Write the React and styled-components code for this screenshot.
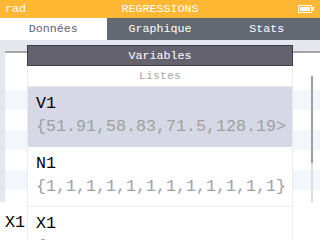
import React from 'react';
import styled, { createGlobalStyle } from 'styled-components';

const GlobalStyle = createGlobalStyle`
  html, body {
    margin: 0;
    padding: 0;
    background: #ffffff;
  }
  body {
    font-family: "Liberation Mono", "DejaVu Sans Mono", monospace;
  }
`;

const TABS = ['Données', 'Graphique', 'Stats'];
const ROWS = ['white', 'blue', 'white', 'blue', 'white', 'blue', 'white', 'blue'];
const VARIABLES = [
  { name: 'V1', values: '{51.91,58.83,71.5,128.19>', selected: true },
  { name: 'N1', values: '{1,1,1,1,1,1,1,1,1,1,1,1}' },
  { name: 'X1', values: '{' },
];

function Battery() {
  return (
    <svg width="16" height="8" viewBox="0 0 16 8">
      <rect x="0.5" y="0.5" width="13" height="7" fill="none" stroke="#fff" strokeWidth="1" />
      <rect x="2" y="2" width="10" height="4" fill="#fff" />
      <rect x="14" y="2" width="2" height="4" fill="#fff" />
    </svg>
  );
}

function App() {
  return (
    <>
      <GlobalStyle />
      <Screen>
        <StatusBar>
          <StatusLeft>rad</StatusLeft>
          <StatusTitle>REGRESSIONS</StatusTitle>
          <StatusRight>
            <Battery />
          </StatusRight>
        </StatusBar>
        <TabBar>
          {TABS.map((t, i) => (
            <Tab key={t} $active={i === 0}>
              {t}
            </Tab>
          ))}
        </TabBar>
        <Body>
          <Table>
            <TopLine />
            <HeaderRow />
            {ROWS.map((c, i) => (
              <Row key={i} $tone={c} />
            ))}
          </Table>
          <ScrollTrack>
            <ScrollThumb />
          </ScrollTrack>
        </Body>
        <Footer>
          <FooterLabel>X1</FooterLabel>
        </Footer>
        <Popup>
          <PopupTitle>Variables</PopupTitle>
          <List>
            <Section>Listes</Section>
            {VARIABLES.map((v) => (
              <Item key={v.name} $selected={v.selected}>
                <ItemName>{v.name}</ItemName>
                <ItemValues>{v.values}</ItemValues>
              </Item>
            ))}
          </List>
        </Popup>
      </Screen>
    </>
  );
}

export default App;

const Screen = styled.div`
  position: relative;
  width: 320px;
  height: 240px;
  overflow: hidden;
  background: #ffffff;
  display: flex;
  flex-direction: column;
`;

const StatusBar = styled.div`
  height: 18px;
  flex: none;
  background: #ffb734;
  color: #ffffff;
  display: grid;
  grid-template-columns: 1fr auto 1fr;
  align-items: center;
  padding: 0 5px;
  font-size: 11.67px;
  line-height: 14px;
`;

const StatusLeft = styled.span`
  justify-self: start;
`;

const StatusTitle = styled.span`
  justify-self: center;
`;

const StatusRight = styled.span`
  justify-self: end;
  display: flex;
  align-items: center;
  padding-right: 1px;
`;

const TabBar = styled.div`
  height: 22px;
  flex: none;
  display: grid;
  grid-template-columns: 1fr 1fr 1fr;
`;

const Tab = styled.div`
  display: flex;
  align-items: center;
  justify-content: center;
  font-size: 11.67px;
  background: ${(p) => (p.$active ? '#ffffff' : '#636973')};
  color: ${(p) => (p.$active ? '#5e6370' : '#ffffff')};
`;

const Body = styled.div`
  position: relative;
  height: 162px;
  flex: none;
  background: #e5e6ee;
  padding: 11px 0 0 5px;
  box-sizing: border-box;
  overflow: hidden;
`;

const Table = styled.div`
  display: flex;
  flex-direction: column;
`;

const TopLine = styled.div`
  height: 2px;
  background: #a3a3a8;
`;

const HeaderRow = styled.div`
  height: 17px;
  background: #ffffff;
`;

const Row = styled.div`
  height: 20px;
  background: ${(p) => (p.$tone === 'blue' ? '#f3f6fd' : '#ffffff')};
`;

const ScrollTrack = styled.div`
  position: absolute;
  left: 311px;
  top: 36px;
  width: 2px;
  height: 126px;
  background: #d9dae2;
`;

const ScrollThumb = styled.div`
  height: 87px;
  background: #a0a0a4;
`;

const Footer = styled.div`
  flex: 1;
  background: #ffffff;
  display: flex;
  align-items: center;
  padding-left: 5px;
`;

const FooterLabel = styled.span`
  font-size: 16.67px;
  color: #000000;
  padding-top: 2px;
`;

const Popup = styled.div`
  position: absolute;
  left: 27px;
  top: 45px;
  width: 266px;
  bottom: 0;
  display: flex;
  flex-direction: column;
`;

const PopupTitle = styled.div`
  height: 21px;
  flex: none;
  box-sizing: border-box;
  background: #656270;
  border: 1px solid #3e3c47;
  color: #ffffff;
  font-size: 11.67px;
  display: flex;
  align-items: center;
  justify-content: center;
`;

const List = styled.div`
  flex: 1;
  background: #ffffff;
  border-left: 1px solid #ececf0;
  border-right: 1px solid #ececf0;
  display: flex;
  flex-direction: column;
`;

const Section = styled.div`
  height: 20px;
  flex: none;
  border-bottom: 1px solid #ececf0;
  color: #a8a8a8;
  font-size: 11.67px;
  display: flex;
  align-items: center;
  justify-content: center;
`;

const Item = styled.div`
  height: 60px;
  flex: none;
  box-sizing: border-box;
  padding: 7px 0 0 8px;
  background: ${(p) => (p.$selected ? '#d6d8e6' : '#ffffff')};
  border-bottom: ${(p) => (p.$selected ? 'none' : '1px solid #ececf0')};
  display: flex;
  flex-direction: column;
  gap: 3px;
`;

const ItemName = styled.div`
  font-size: 16.67px;
  line-height: 20px;
  color: #000000;
`;

const ItemValues = styled.div`
  font-size: 16.67px;
  line-height: 20px;
  color: #a0a0a0;
  white-space: nowrap;
`;
